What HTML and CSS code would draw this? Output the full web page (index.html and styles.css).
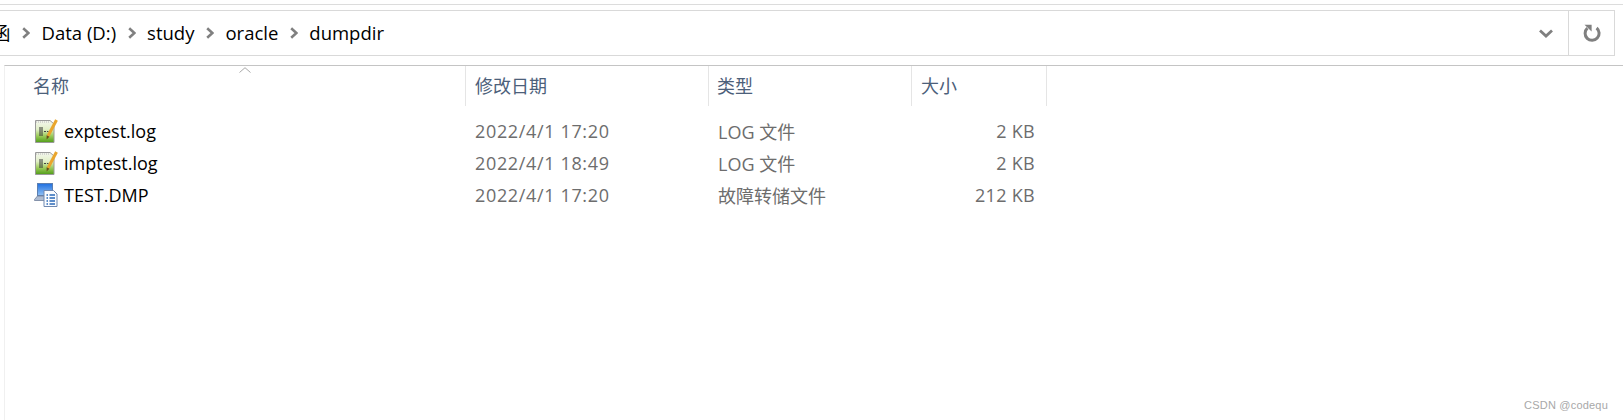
FILE: index.html
```html
<!DOCTYPE html>
<html lang="zh-CN">
<head>
  <meta charset="UTF-8">
  <title>dumpdir</title>
  <link rel="stylesheet" href="styles.css">
</head>
<body>
  <div class="top-line"></div>

  <div class="address-bar">
    <div class="crumbs">
      <span class="crumb first">函</span>
      <svg class="sep" viewBox="0 0 8 12"><path d="M1.2 1.2 L6.4 6 L1.2 10.8" /></svg>
      <span class="crumb">Data (D:)</span>
      <svg class="sep" viewBox="0 0 8 12"><path d="M1.2 1.2 L6.4 6 L1.2 10.8" /></svg>
      <span class="crumb">study</span>
      <svg class="sep" viewBox="0 0 8 12"><path d="M1.2 1.2 L6.4 6 L1.2 10.8" /></svg>
      <span class="crumb">oracle</span>
      <svg class="sep" viewBox="0 0 8 12"><path d="M1.2 1.2 L6.4 6 L1.2 10.8" /></svg>
      <span class="crumb">dumpdir</span>
    </div>
    <div class="dropdown">
      <svg viewBox="0 0 14 9" width="14" height="9"><path d="M1 1.5 L7 7 L13 1.5" fill="none" stroke="#808080" stroke-width="2.8" /></svg>
    </div>
    <div class="refresh">
      <svg viewBox="0 0 18 18" width="18" height="18">
        <path d="M4.4 4.2 A7 7 0 1 0 13.6 4" fill="none" stroke="#808080" stroke-width="3" />
        <path d="M1.5 0.8 L8.6 0.8 L8.6 7.6 Z" fill="#808080" />
      </svg>
    </div>
  </div>

  <div class="browser">
    <div class="columns">
      <div class="col col-name">名称<svg class="sort" viewBox="0 0 12 6" width="12" height="6"><path d="M0.5 5.5 L6 0.7 L11.5 5.5" fill="none" stroke="#a8a8a8" /></svg></div>
      <div class="col col-date">修改日期</div>
      <div class="col col-type">类型</div>
      <div class="col col-size">大小</div>
    </div>

    <div class="files">
      <div class="file">
        <div class="name">
          <svg class="icon" viewBox="0 0 24 24"><use href="#log-icon" /></svg>
          <span>exptest.log</span>
        </div>
        <div class="date">2022/4/1 17:20</div>
        <div class="type">LOG 文件</div>
        <div class="size">2 KB</div>
      </div>
      <div class="file">
        <div class="name">
          <svg class="icon" viewBox="0 0 24 24"><use href="#log-icon" /></svg>
          <span>imptest.log</span>
        </div>
        <div class="date">2022/4/1 18:49</div>
        <div class="type">LOG 文件</div>
        <div class="size">2 KB</div>
      </div>
      <div class="file">
        <div class="name">
          <svg class="icon" viewBox="0 0 24 24"><use href="#dmp-icon" /></svg>
          <span>TEST.DMP</span>
        </div>
        <div class="date">2022/4/1 17:20</div>
        <div class="type">故障转储文件</div>
        <div class="size">212 KB</div>
      </div>
    </div>
  </div>

  <div class="watermark">CSDN @codequ</div>

  <svg class="defs" width="0" height="0">
    <defs>
      <linearGradient id="green" x1="0" y1="0" x2="0" y2="1">
        <stop offset="0" stop-color="#f4f6f0" />
        <stop offset="0.4" stop-color="#e2f0c8" />
        <stop offset="0.7" stop-color="#9ccb5a" />
        <stop offset="1" stop-color="#4f9c18" />
      </linearGradient>
      <linearGradient id="screen" x1="0" y1="0" x2="0" y2="1">
        <stop offset="0" stop-color="#1f6fe0" />
        <stop offset="1" stop-color="#8fc0f4" />
      </linearGradient>
      <symbol id="log-icon" viewBox="0 0 24 24">
        <path d="M1.5 1.5 H16 L20 5 V23.5 H1.5 Z" fill="url(#green)" stroke="#9a9a9a" />
        <path d="M2 3 H16" stroke="#b8b8b8" stroke-dasharray="1 1" />
        <path d="M6 8 V17 M8 8 V17" stroke="#333" stroke-width="1" />
        <path d="M10 12.5 H14.5" stroke="#444" stroke-dasharray="2 1" />
        <path d="M22.5 1 L14 17" stroke="#e9a52c" stroke-width="3" />
        <path d="M12.6 16.2 L15.4 17.8 L12.6 20.6 Z" fill="#6a4a18" />
      </symbol>
      <symbol id="dmp-icon" viewBox="0 0 24 24">
        <rect x="3.5" y="0.5" width="15" height="12" fill="url(#screen)" stroke="#5d7fb0" />
        <path d="M0.5 16.5 L3.5 13 H17 V17.5 H0.5 Z" fill="#aebbd0" stroke="#6f7f9a" stroke-width="0.8" />
        <path d="M10 7.5 H19.5 L23 11 V23.5 H10 Z" fill="#fafcff" stroke="#6f88b0" />
        <path d="M12.5 12 H14 M15.5 12 H21 M12.5 15 H14 M15.5 15 H21 M12.5 18 H14 M15.5 18 H21 M12.5 21 H14 M15.5 21 H21" stroke="#2a68b8" stroke-width="1.3" />
      </symbol>
    </defs>
  </svg>
</body>
</html>
```

FILE: styles.css
```css
html, body {
  margin: 0;
  padding: 0;
}

body {
  position: relative;
  height: 420px;
  overflow: hidden;
  background: #fff;
  font-family: "Open Sans", "Noto Sans CJK SC", sans-serif;
}

.top-line {
  height: 1px;
  margin-top: 4px;
  background: #dcdcdc;
}

.address-bar {
  display: flex;
  height: 44px;
  margin: 5px 8px 0 -2px;
  border: 1px solid #d9d9d9;
}

.crumbs {
  flex: 1;
  display: flex;
  align-items: center;
  padding-bottom: 2px;
  overflow: hidden;
  font-size: 18.5px;
  color: #000;
}

.crumb.first {
  margin-left: -7px;
}

.sep {
  width: 8px;
  height: 12px;
  margin: 2px 11.5px 0;
  fill: none;
  stroke: #808080;
  stroke-width: 2.6;
}

.dropdown {
  width: 44px;
  display: flex;
  align-items: center;
  justify-content: center;
}

.refresh {
  width: 45px;
  display: flex;
  align-items: center;
  justify-content: center;
  border-left: 1px solid #d9d9d9;
}

.browser {
  height: 355px;
  margin-top: 9px;
  margin-left: 4px;
  border-top: 1px solid #c4c4c4;
  border-left: 1px solid #f0f0f0;
}

.columns {
  display: grid;
  grid-template-columns: 461px 243px 203px 135px;
  height: 40px;
}

.col {
  position: relative;
  padding-left: 9px;
  padding-top: 8px;
  border-right: 1px solid #e5e5e5;
  font-size: 18px;
  line-height: 24px;
  color: #4c607a;
}

.col-name {
  padding-left: 28px;
}

.col-type {
  padding-left: 8px;
}

.sort {
  position: absolute;
  top: 1px;
  left: 234px;
}

.files {
  padding-top: 9px;
}

.file {
  display: grid;
  grid-template-columns: 461px 243px 203px 123px;
  align-items: center;
  height: 32px;
  font-size: 18px;
  color: #6d6d6d;
}

.name {
  display: flex;
  align-items: center;
  padding-left: 29px;
  color: #000;
}

.icon {
  width: 24px;
  height: 24px;
  margin-right: 6px;
}

.date {
  padding-left: 9px;
  letter-spacing: 0.65px;
}

.type {
  padding-left: 9px;
}

.size {
  text-align: right;
  letter-spacing: 0.3px;
}

.defs {
  position: absolute;
}

.watermark {
  position: absolute;
  right: 15px;
  bottom: 9px;
  font-family: "Liberation Sans", sans-serif;
  font-size: 11px;
  letter-spacing: 0.2px;
  color: #a8a8a8;
}
```
